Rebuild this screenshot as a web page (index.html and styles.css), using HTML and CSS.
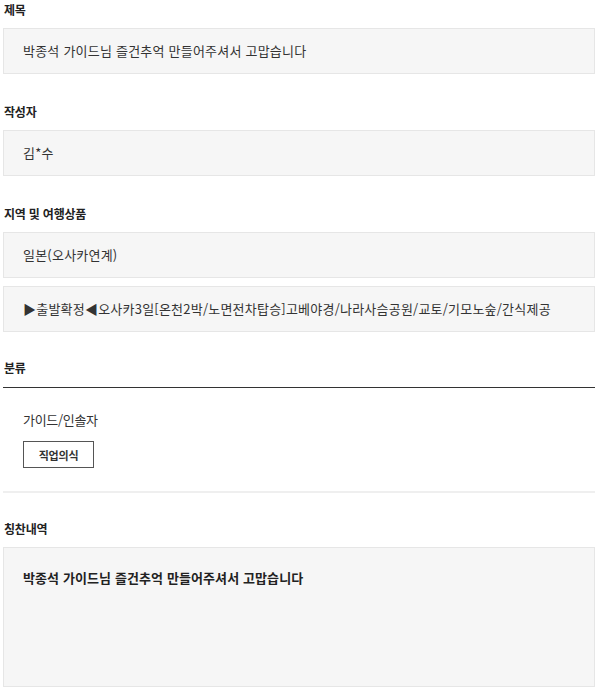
FILE: index.html
```html
<!DOCTYPE html>
<html lang="ko">
<head>
<meta charset="utf-8">
<link rel="stylesheet" href="styles.css">
</head>
<body>
<div class="page">
  <div class="group">
    <div class="label">제목</div>
    <div class="box">박종석 가이드님 즐건추억 만들어주셔서 고맙습니다</div>
  </div>
  <div class="group">
    <div class="label">작성자</div>
    <div class="box">김*수</div>
  </div>
  <div class="group">
    <div class="label">지역 및 여행상품</div>
    <div class="stack">
      <div class="box">일본(오사카연계)</div>
      <div class="box">▶출발확정◀오사카3일[온천2박/노면전차탑승]고베야경/나라사슴공원/교토/기모노숲/간식제공</div>
    </div>
  </div>
  <div class="category">
    <div class="label label-line">분류</div>
    <div class="cat-body">
      <div class="cat-name">가이드/인솔자</div>
      <span class="tag">직업의식</span>
    </div>
  </div>
  <div class="group">
    <div class="label">칭찬내역</div>
    <div class="box box-large">박종석 가이드님 즐건추억 만들어주셔서 고맙습니다</div>
  </div>
</div>
</body>
</html>
```

FILE: styles.css
```css
html, body {
  margin: 0;
  padding: 0;
  background: #ffffff;
}
body {
  font-family: "Noto Sans CJK KR", "Noto Sans", sans-serif;
  color: #333333;
}
.page {
  width: 592px;
  padding: 0 5px 0 3px;
}
.group {
  margin-bottom: 28px;
}
.label {
  font-size: 12px;
  font-weight: 700;
  line-height: 20px;
  color: #222222;
  padding-left: 1px;
  letter-spacing: -0.2px;
  margin-bottom: 8px;
}
.stack {
  display: flex;
  flex-direction: column;
  gap: 8px;
}
.box {
  background: #f6f6f6;
  border: 1px solid #e6e6e6;
  padding: 13px 19px;
  font-size: 13px;
  line-height: 18px;
  letter-spacing: 0.22px;
  color: #333333;
  white-space: nowrap;
}
.box-large {
  height: 104px;
  padding-top: 21px;
  font-weight: 700;
  color: #222222;
  letter-spacing: 0.1px;
}
.category {
  margin-top: -2px;
  border-bottom: 2px solid #efefef;
  margin-bottom: 26px;
}
.label-line {
  border-bottom: 1px solid #333333;
  padding-bottom: 9px;
  margin-bottom: 0;
}
.cat-body {
  padding: 22px 20px 23px;
  display: flex;
  flex-direction: column;
  align-items: flex-start;
  gap: 11px;
}
.cat-name {
  font-size: 13px;
  line-height: 20px;
  letter-spacing: -0.3px;
  color: #333333;
}
.tag {
  display: inline-flex;
  align-items: center;
  justify-content: center;
  width: 69px;
  height: 25px;
  border: 1px solid #555555;
  font-size: 11px;
  font-weight: 700;
  letter-spacing: -0.2px;
  color: #333333;
}
```
